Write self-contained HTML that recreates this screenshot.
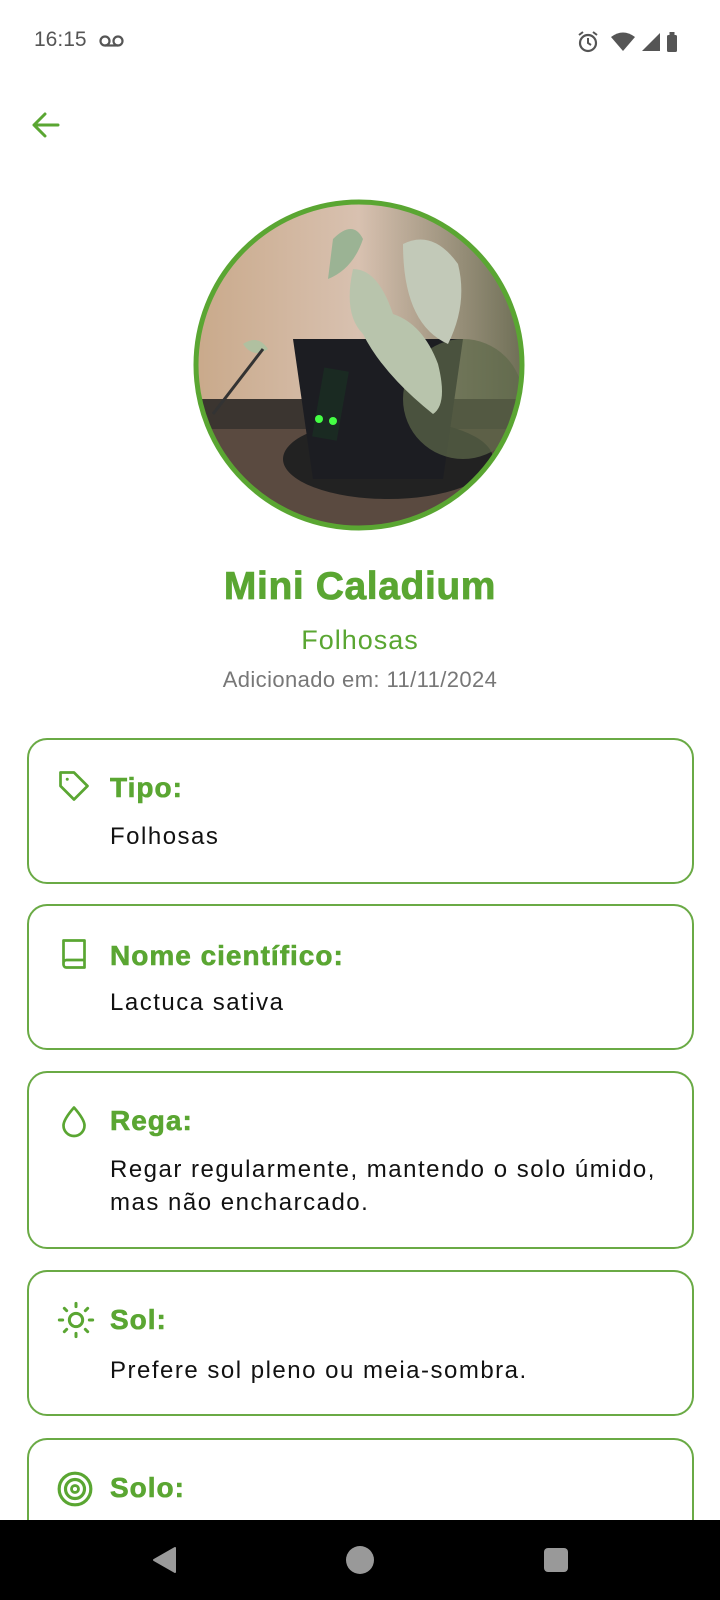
<!DOCTYPE html>
<html><head><meta charset="utf-8">
<style>
*{margin:0;padding:0;box-sizing:border-box}
body{width:720px;height:1600px;background:#fff;font-family:"Liberation Sans",sans-serif;position:relative;overflow:hidden}
.abs{position:absolute}
.card{position:absolute;left:27px;width:667px;border:2px solid #6aaa45;border-radius:20px;background:#fff}
.card .h{position:absolute;left:81px;font-weight:bold;font-size:28px;letter-spacing:1px;color:#5aa632;-webkit-text-stroke:0.6px #5aa632}
.card .t{position:absolute;left:81px;font-size:24px;letter-spacing:1.5px;color:#111;line-height:33px;white-space:nowrap}
.card svg{position:absolute;left:27px}
.c{text-align:center;width:720px;left:0}
</style></head><body>
<div class="abs" style="left:34px;top:28px;font-size:21px;color:#555">16:15</div>
<svg class="abs" style="left:98px;top:34px" width="28" height="14" viewBox="0 0 28 14"><circle cx="7" cy="7" r="4.5" fill="none" stroke="#555" stroke-width="2.2"/><circle cx="20" cy="7" r="4.5" fill="none" stroke="#555" stroke-width="2.2"/><line x1="7" y1="11.5" x2="20" y2="11.5" stroke="#555" stroke-width="2.2"/></svg>
<svg class="abs" style="left:576px;top:30px" width="114" height="24" viewBox="0 0 114 24">
<circle cx="12" cy="13" r="8" fill="none" stroke="#555" stroke-width="2.2"/><path d="M12 8v5l3 2M3 5l4-3M21 5l-4-3" stroke="#555" stroke-width="2" fill="none"/>
<path d="M35 7q12-9 24 0l-12 14z" fill="#555"/>
<path d="M66 21L84 3v18z" fill="#555"/>
<rect x="91" y="5" width="10" height="17" rx="1.5" fill="#555"/><rect x="93.5" y="2" width="5" height="3" fill="#555"/>
</svg>
<svg class="abs" style="left:30px;top:110px" width="32" height="30" viewBox="0 0 32 30"><path d="M28 15H4M15 4L4 15l11 11" stroke="#5aa632" stroke-width="3" fill="none" stroke-linecap="round" stroke-linejoin="round"/></svg>

<svg class="abs" style="left:193px;top:199px" width="332" height="332" viewBox="0 0 332 332">
<defs><clipPath id="cp"><circle cx="166" cy="166" r="163"/></clipPath>
<linearGradient id="bg" x1="0" x2="1"><stop offset="0" stop-color="#c9a98a"/><stop offset=".5" stop-color="#d8c1b0"/><stop offset="1" stop-color="#6d6e55"/></linearGradient></defs>
<g clip-path="url(#cp)">
<rect width="332" height="332" fill="url(#bg)"/>
<rect x="0" y="200" width="332" height="132" fill="#3b3530"/>
<rect x="0" y="230" width="332" height="102" fill="#5a4a40"/>
<ellipse cx="195" cy="260" rx="105" ry="40" fill="#222"/>
<path d="M100 140h170l-20 140h-130z" fill="#1c1d22"/>
<ellipse cx="270" cy="200" rx="60" ry="60" fill="#5e6a4a" opacity=".7"/>
<path d="M140 40q20-20 30 0-10 30-35 40z" fill="#9bb394"/>
<path d="M210 45q30-15 55 20 10 40-10 80-45-20-45-100z" fill="#c2c9b8"/>
<path d="M160 70q25 0 40 45 30 10 45 50 10 40-5 50-50-40-70-80-20-20-10-65z" fill="#b8c4ac"/>
<path d="M50 145q15-10 25 5-15 10-25-5z" fill="#b0c0a0"/>
<path d="M70 150L20 215" stroke="#333" stroke-width="3"/>
<rect x="125" y="170" width="25" height="70" fill="#1a2a22" transform="rotate(10 137 205)"/>
<circle cx="126" cy="220" r="4" fill="#4f4"/><circle cx="140" cy="222" r="4" fill="#4f4"/>
</g>
<circle cx="166" cy="166" r="163" fill="none" stroke="#5aa632" stroke-width="5"/>
</svg>

<div class="abs c" style="top:565px;font-size:39px;letter-spacing:0.6px;font-weight:bold;color:#5aa632;-webkit-text-stroke:0.8px #5aa632">Mini Caladium</div>
<div class="abs c" style="top:625px;font-size:27px;letter-spacing:1px;color:#5aa632">Folhosas</div>
<div class="abs c" style="top:667px;font-size:22px;letter-spacing:0.4px;color:#777">Adicionado em: 11/11/2024</div>

<div class="card" style="top:738px;height:146px">
<svg style="top:28px" width="36" height="36" viewBox="0 0 24 24"><path d="M3 3h9l9 9-9 9-9-9z" fill="none" stroke="#5aa632" stroke-width="1.8" stroke-linejoin="round"/><circle cx="7.5" cy="7.5" r="1" fill="#5aa632"/></svg>
<div class="h" style="top:32px">Tipo:</div>
<div class="t" style="top:80px">Folhosas</div>
</div>
<div class="card" style="top:904px;height:146px">
<svg style="top:30px" width="36" height="36" viewBox="0 0 24 24"><path d="M5 3h14v18H7a2 2 0 0 1-2-2zM5 18a2 2 0 0 1 2-2h12" fill="none" stroke="#5aa632" stroke-width="1.8" stroke-linejoin="round"/></svg>
<div class="h" style="top:34px">Nome científico:</div>
<div class="t" style="top:80px">Lactuca sativa</div>
</div>
<div class="card" style="top:1071px;height:178px">
<svg style="top:30px" width="36" height="36" viewBox="0 0 24 24"><path d="M12 3q7 8 7 12a7 7 0 0 1-14 0q0-4 7-12z" fill="none" stroke="#5aa632" stroke-width="1.8" stroke-linejoin="round"/></svg>
<div class="h" style="top:32px">Rega:</div>
<div class="t" style="top:80px">Regar regularmente, mantendo o solo úmido,<br>mas não encharcado.</div>
</div>
<div class="card" style="top:1270px;height:146px">
<svg style="top:28px" width="40" height="40" viewBox="0 0 24 24"><circle cx="12" cy="12" r="4" fill="none" stroke="#5aa632" stroke-width="1.8"/><path d="M12 2v2M12 20v2M2 12h2M20 12h2M5 5l1.4 1.4M17.6 17.6L19 19M5 19l1.4-1.4M17.6 6.4L19 5" stroke="#5aa632" stroke-width="1.8" stroke-linecap="round"/></svg>
<div class="h" style="top:32px">Sol:</div>
<div class="t" style="top:82px">Prefere sol pleno ou meia-sombra.</div>
</div>
<div class="card" style="top:1438px;height:146px">
<svg style="top:30px" width="38" height="38" viewBox="0 0 24 24"><circle cx="12" cy="12" r="10" fill="none" stroke="#5aa632" stroke-width="2"/><circle cx="12" cy="12" r="6" fill="none" stroke="#5aa632" stroke-width="2"/><circle cx="12" cy="12" r="2.2" fill="none" stroke="#5aa632" stroke-width="1.8"/></svg>
<div class="h" style="top:32px">Solo:</div>
</div>

<div class="abs" style="left:0;top:1520px;width:720px;height:80px;background:#000"></div>
<svg class="abs" style="left:150px;top:1545px" width="30" height="30" viewBox="0 0 30 30"><path d="M25 3v24L4 15z" fill="#999" stroke="#999" stroke-width="2" stroke-linejoin="round"/></svg>
<div class="abs" style="left:346px;top:1546px;width:28px;height:28px;border-radius:50%;background:#999"></div>
<div class="abs" style="left:544px;top:1548px;width:24px;height:24px;border-radius:4px;background:#999"></div>
</body></html>
